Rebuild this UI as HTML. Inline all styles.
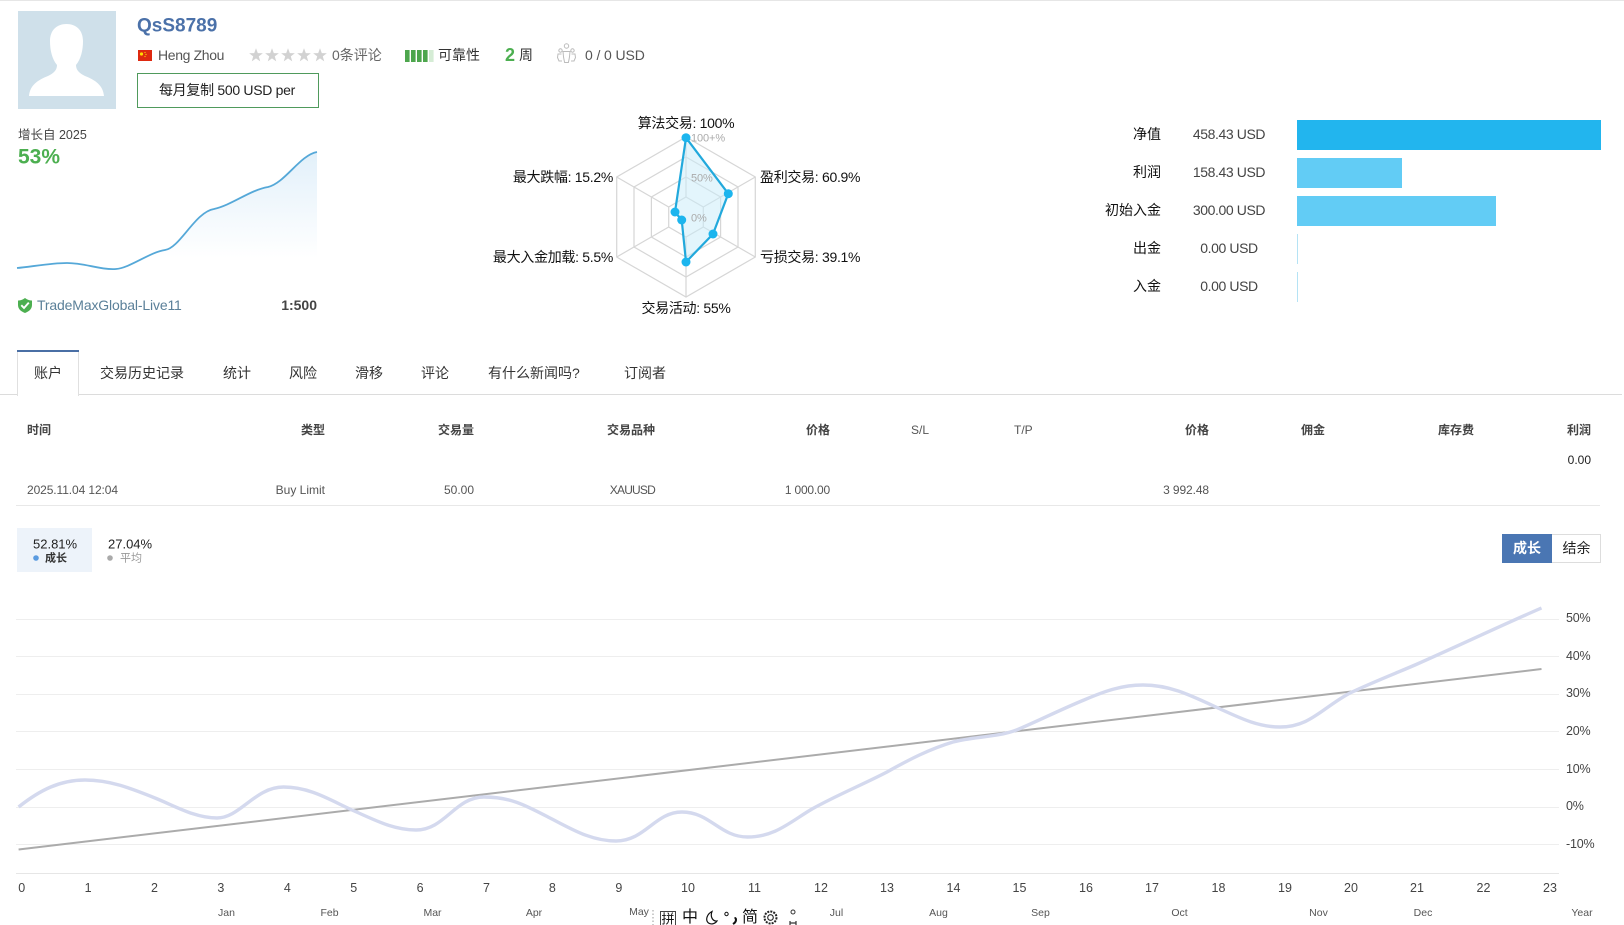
<!DOCTYPE html>
<html lang="zh">
<head>
<meta charset="utf-8">
<title>QsS8789</title>
<style>
html,body{margin:0;padding:0;background:#fff;}
#p{position:relative;width:1624px;height:925px;overflow:hidden;background:#fff;font-family:"Liberation Sans","Noto Sans CJK SC",sans-serif;font-size:14px;color:#333;}
#p svg.g{position:absolute;left:0;top:0;}
.t{position:absolute;white-space:nowrap;line-height:1;transform:translate(0,-50%);}
.r{transform:translate(-100%,-50%);}
.c{transform:translate(-50%,-50%);}
.rad{font-size:14px;color:#111;letter-spacing:-.3px;}
.tab{font-size:14px;color:#333;}
.th{font-size:12px;font-weight:bold;color:#444;}
.td{font-size:12px;color:#555;}
.x{font-size:12.5px;color:#444;}
.m{font-size:10.5px;color:#555;}
.y{font-size:12.5px;color:#444;letter-spacing:-.2px;}
.tick{font-size:11px;color:#aaa;letter-spacing:-.1px;}
.lb{font-size:14px;color:#111;}
.val{font-size:14px;color:#444;letter-spacing:-.4px;}
.ime{font-size:16px;color:#111;}
</style>
</head>
<body>
<div id="p">
<svg class="g" width="1624" height="925" viewBox="0 0 1624 925" xmlns="http://www.w3.org/2000/svg">
  <defs>
    <linearGradient id="sp" x1="0" y1="152" x2="0" y2="258" gradientUnits="userSpaceOnUse">
      <stop offset="0" stop-color="#e2f0fa"/>
      <stop offset="1" stop-color="#ffffff"/>
    </linearGradient>
  </defs>
  <rect x="0" y="0" width="1624" height="1" fill="#e6e6e6"/>
  <!-- avatar -->
  <rect x="18" y="11" width="98" height="98" fill="#cfe0ea"/>
  <path d="M29,96 C30,85 38,80 48,76 C54,73 57,70 57,65 C52,59 50,50 50,41 C50,30 57,24 66.5,24 C76,24 83,30 83,41 C83,50 81,59 76,65 C76,70 79,73 85,76 C95,80 103,85 104,96 Z" fill="#fff"/>
  <!-- flag -->
  <rect x="138" y="50" width="14" height="11" fill="#de2910"/>
  <circle cx="141.5" cy="54" r="1.6" fill="#ffde00"/>
  <circle cx="145" cy="52.5" r=".6" fill="#ffde00"/><circle cx="146" cy="54.5" r=".6" fill="#ffde00"/><circle cx="145" cy="56.5" r=".6" fill="#ffde00"/>
  <!-- stars -->
  <g fill="#d2d2d2">
    <polygon transform="translate(256,55.5) scale(.9)" points="0,-8 2,-2.6 7.6,-2.5 3.1,1 4.7,6.5 0,3.2 -4.7,6.5 -3.1,1 -7.6,-2.5 -2,-2.6"/>
    <polygon transform="translate(272,55.5) scale(.9)" points="0,-8 2,-2.6 7.6,-2.5 3.1,1 4.7,6.5 0,3.2 -4.7,6.5 -3.1,1 -7.6,-2.5 -2,-2.6"/>
    <polygon transform="translate(288,55.5) scale(.9)" points="0,-8 2,-2.6 7.6,-2.5 3.1,1 4.7,6.5 0,3.2 -4.7,6.5 -3.1,1 -7.6,-2.5 -2,-2.6"/>
    <polygon transform="translate(304,55.5) scale(.9)" points="0,-8 2,-2.6 7.6,-2.5 3.1,1 4.7,6.5 0,3.2 -4.7,6.5 -3.1,1 -7.6,-2.5 -2,-2.6"/>
    <polygon transform="translate(320,55.5) scale(.9)" points="0,-8 2,-2.6 7.6,-2.5 3.1,1 4.7,6.5 0,3.2 -4.7,6.5 -3.1,1 -7.6,-2.5 -2,-2.6"/>
  </g>
  <!-- reliability bars -->
  <g fill="#4da64d">
    <rect x="405" y="50" width="4.6" height="12"/><rect x="411" y="50" width="4.6" height="12"/><rect x="417" y="50" width="4.6" height="12"/><rect x="423" y="50" width="4.6" height="12"/>
  </g>
  <rect x="429" y="50" width="4.6" height="12" fill="#d5ecd5"/>
  <!-- people -->
  <g fill="none" stroke="#bcbcbc" stroke-width="1">
    <circle cx="566.5" cy="46" r="2.2"/>
    <circle cx="560.5" cy="50.5" r="1.7"/>
    <circle cx="572.5" cy="50.5" r="1.7"/>
    <path d="M563,51.5 h7 l-.6,6 l-1,5 h-3.8 l-1,-5 Z"/>
    <path d="M561.5,54 h-3.5 l-.5,3.5 l1.5,3.5 h3 M571.5,54 h3.5 l.5,3.5 l-1.5,3.5 h-3"/>
  </g>
  <!-- button -->
  <rect x="137.5" y="73.5" width="181" height="34" fill="#fff" stroke="#4f9a5c" stroke-width="1"/>
  <!-- sparkline -->
  <path d="M17,268 C30,267 50,263 67,263 C85,263 100,270 116,269 C130,268 150,252 165,250 C180,248 195,212 214,209 C232,205 250,190 268,187 C285,183 300,155 317,152 L317,262 L17,268 Z" fill="url(#sp)"/>
  <path d="M17,268 C30,267 50,263 67,263 C85,263 100,270 116,269 C130,268 150,252 165,250 C180,248 195,212 214,209 C232,205 250,190 268,187 C285,183 300,155 317,152" fill="none" stroke="#55a8d8" stroke-width="1.8"/>
  <!-- shield -->
  <path d="M25,298 C27.5,300 30,300.5 32,300.5 L32,305 C32,309 29,311.5 25,313 C21,311.5 18,309 18,305 L18,300.5 C20,300.5 22.5,300 25,298 Z" fill="#4caf50"/>
  <path d="M21.3,305.2 L24,308 L28.8,302.6" fill="none" stroke="#fff" stroke-width="1.9"/>
  <!-- radar -->
  <g fill="none" stroke="#d6d6d6" stroke-width="1.2">
    <polygon points="686,137 755.3,177 755.3,257 686,297 616.7,257 616.7,177"/>
    <polygon points="686,157 738,187 738,247 686,277 634,247 634,187"/>
    <polygon points="686,177 720.6,197 720.6,237 686,257 651.4,237 651.4,197"/>
    <polygon points="686,197 703.3,207 703.3,227 686,237 668.7,227 668.7,207"/>
    <path d="M686,137 V197 M755.3,177 L703.3,207 M755.3,257 L703.3,227 M686,297 V237 M616.7,257 L668.7,227 M616.7,177 L668.7,207"/>
  </g>
  <polygon points="686,137.7 728.3,193.7 713,234 686,262 681.7,220 675,212" fill="#c8ebfa" fill-opacity=".5" stroke="#22a9dc" stroke-width="2.2"/>
  <g fill="#1cb5ee">
    <circle cx="686" cy="137.7" r="4.5"/><circle cx="728.3" cy="193.7" r="4.5"/><circle cx="713" cy="234" r="4.5"/><circle cx="686" cy="262" r="4.5"/><circle cx="681.7" cy="220" r="4.5"/><circle cx="675" cy="212" r="4.5"/>
  </g>
  <!-- bars -->
  <rect x="1297" y="120" width="304" height="30" fill="#22b5ee"/>
  <rect x="1297" y="158" width="105" height="30" fill="#62ccf5"/>
  <rect x="1297" y="196" width="199" height="30" fill="#62ccf5"/>
  <rect x="1297" y="234" width="1" height="30" fill="#b5e3f5"/>
  <rect x="1297" y="272" width="1" height="30" fill="#b5e3f5"/>
  <!-- tabs -->
  <rect x="0" y="394" width="1622" height="1" fill="#dcdcdc"/>
  <rect x="17" y="350" width="62" height="46" fill="#fff"/>
  <rect x="17" y="350" width="1" height="46" fill="#e0e0e0"/>
  <rect x="78" y="350" width="1" height="46" fill="#e0e0e0"/>
  <rect x="17" y="350" width="62" height="2" fill="#4a6fa5"/>
  <!-- table -->
  <rect x="16" y="505" width="1584" height="1" fill="#e8e8e8"/>
  <!-- legend -->
  <rect x="17" y="528" width="75" height="44" fill="#edf3fa"/>
  <circle cx="36" cy="558" r="2.8" fill="#5a9be0"/>
  <circle cx="110" cy="558" r="2.8" fill="#aaa"/>
  <!-- toggle -->
  <rect x="1551.5" y="534.5" width="49" height="28" fill="#fff" stroke="#ddd"/>
  <rect x="1502" y="534" width="50" height="29" fill="#4a76b3"/>
  <!-- grid -->
  <g fill="#eeeeee">
    <rect x="16" y="619" width="1543" height="1"/>
    <rect x="16" y="656" width="1543" height="1"/>
    <rect x="16" y="694" width="1543" height="1"/>
    <rect x="16" y="731" width="1543" height="1"/>
    <rect x="16" y="769" width="1543" height="1"/>
    <rect x="16" y="807" width="1543" height="1"/>
    <rect x="16" y="844" width="1543" height="1"/>
    <rect x="16" y="873" width="1543" height="1" fill="#e6e6e6"/>
  </g>
  <path d="M18.6,849.5 L1541.5,669" stroke="#ababab" stroke-width="2" fill="none"/>
  <path d="M18.6,807 C40,790 60,780 85,780 C110,780 130,788 155,798 C175,806 195,818 217,818 C240,818 255,787 283.5,787 C310,787 330,800 352,810 C375,820 393,830 416,830 C445,830 455,797 484,797 C510,797 525,805 548,817 C570,828 590,841 616,841 C645,841 655,812 682,812 C710,812 720,837 747.5,837 C775,837 790,822 812,809 C837,795 862,785 887,772 C910,759 930,749 953,742 C975,736 997,738 1019,729 C1040,720 1062,709 1084,700 C1105,691 1122,685 1143,685 C1170,685 1190,695 1218,708 C1240,718 1258,727 1280,727 C1310,727 1322,708 1350,693 C1372,682.5 1394,674 1415,665 C1458,646 1500,626 1541.5,608" fill="none" stroke="#d4d9ee" stroke-width="3.4"/>
  <!-- IME bar -->
  <path d="M653,910 V925" stroke="#999" stroke-width="1" stroke-dasharray="1.5 2"/>
  <rect x="660.5" y="911.5" width="15" height="14" fill="none" stroke="#444"/>
  <path d="M712,911.5 C707,914 705,920 708.5,923 C711.5,925 715.5,923.5 717,921 C712.5,921.5 710,916.5 712,911.5 Z" fill="none" stroke="#111" stroke-width="1.2"/>
  <circle cx="726.5" cy="914" r="1.7" fill="none" stroke="#111" stroke-width="1"/>
  <path d="M734.5,918 c2,0 2,3 0,5 l-1.5,1" fill="none" stroke="#111" stroke-width="2"/>
  <circle cx="770.5" cy="917.5" r="6" fill="none" stroke="#222" stroke-width="2" stroke-dasharray="2 1.1"/>
  <circle cx="770.5" cy="917.5" r="2.8" fill="none" stroke="#222" stroke-width="1.1"/>
  <circle cx="793" cy="912" r="2" fill="none" stroke="#333"/>
  <path d="M790,921 v4 M796,921 v4 M790,923 h6" stroke="#333" stroke-width="1.2" fill="none"/>
</svg>

<div class="t" style="left:137px;top:26px;font-size:19px;font-weight:bold;color:#4b71a9;">QsS8789</div>
<div class="t" style="left:158px;top:55px;font-size:14px;color:#555;letter-spacing:-.35px;">Heng Zhou</div>
<div class="t" style="left:332px;top:55px;font-size:14px;color:#666;">0条评论</div>
<div class="t" style="left:438px;top:55px;font-size:14px;color:#333;">可靠性</div>
<div class="t" style="left:505px;top:55px;font-size:18px;font-weight:bold;color:#4caf50;">2</div>
<div class="t" style="left:519px;top:55px;font-size:14px;color:#333;">周</div>
<div class="t" style="left:585px;top:55px;font-size:14px;color:#555;letter-spacing:-.1px;">0 / 0 USD</div>
<div class="t c" style="left:227px;top:90px;font-size:14px;color:#222;letter-spacing:-.3px;">每月复制 500 USD per</div>

<div class="t" style="left:18px;top:135px;font-size:12.5px;color:#444;">增长自 2025</div>
<div class="t" style="left:18px;top:157px;font-size:21px;font-weight:bold;color:#4caf50;">53%</div>
<div class="t" style="left:37px;top:305px;font-size:14px;color:#5b8099;letter-spacing:-.15px;">TradeMaxGlobal-Live11</div>
<div class="t r" style="left:317px;top:305px;font-size:14px;font-weight:bold;color:#444;">1:500</div>

<div class="t c rad" style="left:686px;top:123px;">算法交易: 100%</div>
<div class="t rad" style="left:760px;top:177px;">盈利交易: 60.9%</div>
<div class="t rad" style="left:760px;top:257px;">亏损交易: 39.1%</div>
<div class="t c rad" style="left:686px;top:308px;">交易活动: 55%</div>
<div class="t r rad" style="left:613px;top:257px;">最大入金加载: 5.5%</div>
<div class="t r rad" style="left:613px;top:177px;">最大跌幅: 15.2%</div>
<div class="t tick" style="left:691px;top:139px;">100+%</div>
<div class="t tick" style="left:691px;top:179px;">50%</div>
<div class="t tick" style="left:691px;top:219px;">0%</div>

<div class="t r lb" style="left:1161px;top:134px;">净值</div>
<div class="t r lb" style="left:1161px;top:172px;">利润</div>
<div class="t r lb" style="left:1161px;top:210px;">初始入金</div>
<div class="t r lb" style="left:1161px;top:248px;">出金</div>
<div class="t r lb" style="left:1161px;top:286px;">入金</div>
<div class="t c val" style="left:1229px;top:134px;">458.43 USD</div>
<div class="t c val" style="left:1229px;top:172px;">158.43 USD</div>
<div class="t c val" style="left:1229px;top:210px;">300.00 USD</div>
<div class="t c val" style="left:1229px;top:248px;">0.00 USD</div>
<div class="t c val" style="left:1229px;top:286px;">0.00 USD</div>

<div class="t tab" style="left:34px;top:373px;">账户</div>
<div class="t tab" style="left:100px;top:373px;">交易历史记录</div>
<div class="t tab" style="left:223px;top:373px;">统计</div>
<div class="t tab" style="left:289px;top:373px;">风险</div>
<div class="t tab" style="left:355px;top:373px;">滑移</div>
<div class="t tab" style="left:421px;top:373px;">评论</div>
<div class="t tab" style="left:488px;top:373px;">有什么新闻吗?</div>
<div class="t tab" style="left:624px;top:373px;">订阅者</div>

<div class="t th" style="left:27px;top:429.5px;">时间</div>
<div class="t r th" style="left:325px;top:429.5px;">类型</div>
<div class="t r th" style="left:474px;top:429.5px;">交易量</div>
<div class="t r th" style="left:655px;top:429.5px;">交易品种</div>
<div class="t r th" style="left:830px;top:429.5px;">价格</div>
<div class="t td" style="left:911px;top:430px;">S/L</div>
<div class="t td" style="left:1014px;top:430px;">T/P</div>
<div class="t r th" style="left:1209px;top:429.5px;">价格</div>
<div class="t r th" style="left:1325px;top:429.5px;">佣金</div>
<div class="t r th" style="left:1474px;top:429.5px;">库存费</div>
<div class="t r th" style="left:1591px;top:429.5px;">利润</div>
<div class="t r td" style="left:1591px;top:460px;color:#222;">0.00</div>
<div class="t td" style="left:27px;top:490px;letter-spacing:-.1px;">2025.11.04 12:04</div>
<div class="t r td" style="left:325px;top:490px;">Buy Limit</div>
<div class="t r td" style="left:474px;top:490px;">50.00</div>
<div class="t r td" style="left:655px;top:490px;letter-spacing:-.8px;">XAUUSD</div>
<div class="t r td" style="left:830px;top:490px;letter-spacing:-.2px;">1 000.00</div>
<div class="t r td" style="left:1209px;top:490px;letter-spacing:-.1px;">3 992.48</div>

<div class="t" style="left:33px;top:544px;font-size:13px;color:#222;">52.81%</div>
<div class="t" style="left:45px;top:559px;font-size:11px;font-weight:bold;color:#333;">成长</div>
<div class="t" style="left:108px;top:544px;font-size:13px;color:#222;">27.04%</div>
<div class="t" style="left:120px;top:559px;font-size:11px;color:#999;">平均</div>
<div class="t c" style="left:1527px;top:548px;font-size:14px;font-weight:bold;color:#fff;">成长</div>
<div class="t c" style="left:1576.5px;top:548px;font-size:14px;color:#222;">结余</div>

<div class="t y" style="left:1566px;top:618px;">50%</div>
<div class="t y" style="left:1566px;top:656px;">40%</div>
<div class="t y" style="left:1566px;top:693px;">30%</div>
<div class="t y" style="left:1566px;top:731px;">20%</div>
<div class="t y" style="left:1566px;top:769px;">10%</div>
<div class="t y" style="left:1566px;top:806px;">0%</div>
<div class="t y" style="left:1566px;top:844px;">-10%</div>

<div class="t c x" style="left:21.7px;top:888px;">0</div>
<div class="t c x" style="left:88.1px;top:888px;">1</div>
<div class="t c x" style="left:154.5px;top:888px;">2</div>
<div class="t c x" style="left:220.9px;top:888px;">3</div>
<div class="t c x" style="left:287.3px;top:888px;">4</div>
<div class="t c x" style="left:353.7px;top:888px;">5</div>
<div class="t c x" style="left:420.1px;top:888px;">6</div>
<div class="t c x" style="left:486.5px;top:888px;">7</div>
<div class="t c x" style="left:552.4px;top:888px;">8</div>
<div class="t c x" style="left:618.8px;top:888px;">9</div>
<div class="t c x" style="left:688px;top:888px;">10</div>
<div class="t c x" style="left:754.5px;top:888px;">11</div>
<div class="t c x" style="left:821px;top:888px;">12</div>
<div class="t c x" style="left:887px;top:888px;">13</div>
<div class="t c x" style="left:953.5px;top:888px;">14</div>
<div class="t c x" style="left:1019.5px;top:888px;">15</div>
<div class="t c x" style="left:1086px;top:888px;">16</div>
<div class="t c x" style="left:1152px;top:888px;">17</div>
<div class="t c x" style="left:1218.5px;top:888px;">18</div>
<div class="t c x" style="left:1285px;top:888px;">19</div>
<div class="t c x" style="left:1351px;top:888px;">20</div>
<div class="t c x" style="left:1417px;top:888px;">21</div>
<div class="t c x" style="left:1483.5px;top:888px;">22</div>
<div class="t c x" style="left:1550px;top:888px;">23</div>

<div class="t c m" style="left:226.5px;top:913px;">Jan</div>
<div class="t c m" style="left:329.5px;top:913px;">Feb</div>
<div class="t c m" style="left:432.5px;top:913px;">Mar</div>
<div class="t c m" style="left:534px;top:913px;">Apr</div>
<div class="t c m" style="left:639px;top:912px;">May</div>
<div class="t c m" style="left:836.5px;top:913px;">Jul</div>
<div class="t c m" style="left:938.5px;top:913px;">Aug</div>
<div class="t c m" style="left:1040.5px;top:913px;">Sep</div>
<div class="t c m" style="left:1179.5px;top:913px;">Oct</div>
<div class="t c m" style="left:1318.5px;top:913px;">Nov</div>
<div class="t c m" style="left:1423px;top:913px;">Dec</div>
<div class="t c m" style="left:1582px;top:913px;">Year</div>

<div class="t c" style="left:668px;top:918.5px;font-size:13px;color:#111;">拼</div>
<div class="t c ime" style="left:690px;top:918px;">中</div>
<div class="t c ime" style="left:750px;top:918px;">简</div>
</div>
</body>
</html>
